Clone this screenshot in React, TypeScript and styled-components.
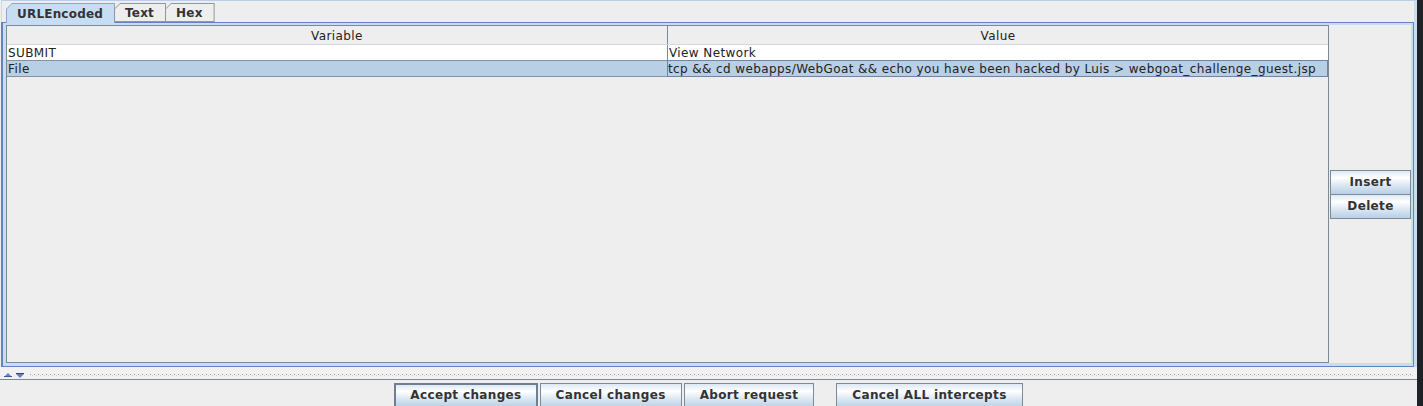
import styled, { createGlobalStyle, css } from 'styled-components';

const Global = createGlobalStyle`
  html, body {
    margin: 0;
    padding: 0;
    background: #eeeeee;
  }
  body {
    font-family: 'DejaVu Sans', 'Liberation Sans', sans-serif;
    font-size: 12px;
  }
  * {
    box-sizing: border-box;
  }
`;

const Screen = styled.div`
  width: 1423px;
  height: 406px;
  display: flex;
  overflow: hidden;
  background: #eeeeee;
`;

const Main = styled.div`
  width: 1417px;
  flex: none;
  display: flex;
  flex-direction: column;
`;

const DarkEdge = styled.div`
  flex: 1;
  background: #1e2126;
`;

const Tabbed = styled.div`
  flex: none;
  height: 367px;
  margin-left: 1px;
  border-top: 1px solid #b8cfe5;
  border-left: 1px solid #c8ddf2;
  border-right: 3px solid #c8ddf2;
  padding-top: 2px;
  display: flex;
  flex-direction: column;
`;

const TabStrip = styled.div`
  flex: none;
  display: flex;
  height: 20px;
  padding-left: 4px;
  margin-bottom: -1px;
  position: relative;
  z-index: 1;
`;

const TabOuter = styled.div<{ $selected?: boolean }>`
  height: ${(p) => (p.$selected ? 20 : 19)}px;
  margin-right: -1px;
  padding: 1px 1px ${(p) => (p.$selected ? 0 : 1)}px 1px;
  background: ${(p) => (p.$selected ? '#8fa6c6' : '#8a99a8')};
  clip-path: polygon(0 6px, 6px 0, 100% 0, 100% 100%, 0 100%);
`;

const TabFace = styled.div<{ $selected?: boolean }>`
  height: 100%;
  padding: 1px 11px 0 10px;
  display: flex;
  align-items: center;
  font-weight: bold;
  letter-spacing: 0.2px;
  color: #333333;
  background: ${(p) => (p.$selected ? '#c8ddf2' : '#eeeeee')};
  clip-path: polygon(0 5px, 5px 0, 100% 0, 100% 100%, 0 100%);
`;

const TabBody = styled.div`
  flex: 1;
  display: flex;
  border: 1px solid #6382bf;
  border-left-width: 2px;
  margin-left: -1px;
  padding: 2px 2px 3px 3px;
  background: #c8ddf2;
  min-height: 0;
`;

const TableScroll = styled.div`
  flex: 1;
  border: 1px solid #7a8a99;
  background: #eeeeee;
  display: flex;
  flex-direction: column;
`;

const Row = styled.div<{ $kind: 'header' | 'plain' | 'selected' }>`
  flex: none;
  display: grid;
  grid-template-columns: 660px 1fr;
  color: #222222;
  letter-spacing: 0.4px;
  ${(p) =>
    p.$kind === 'header'
      ? css`
          height: 19px;
          background: #eeeeee;
          border-bottom: 1px solid #d4d9df;
        `
      : css`
          height: 16px;
          border-bottom: 1px solid #8492a3;
          background: ${p.$kind === 'selected' ? '#b8cfe5' : '#ffffff'};
        `}
`;

const Cell = styled.div<{ $header?: boolean; $divider?: boolean; $focus?: boolean }>`
  line-height: 15px;
  padding: 1px 0 0 1px;
  white-space: nowrap;
  overflow: hidden;
  ${(p) =>
    p.$header &&
    css`
      text-align: center;
      line-height: 18px;
      padding: 1px 0 0 0;
    `}
  ${(p) => p.$divider && 'border-left: 1px solid #7a8a99;'}
  ${(p) =>
    p.$focus &&
    css`
      box-shadow: inset 0 0 0 1px #6f84a8;
      margin-top: -1px;
      height: 17px;
      padding-top: 2px;
    `}
`;

const SidePanel = styled.div`
  width: 82px;
  padding-left: 1px;
  background: #eeeeee;
  display: flex;
  flex-direction: column;
  justify-content: center;
`;

const buttonFace = css`
  font-family: 'DejaVu Sans', 'Liberation Sans', sans-serif;
  font-size: 12px;
  font-weight: bold;
  letter-spacing: 0.35px;
  color: #333333;
  border: 1px solid #7a8a99;
  background: linear-gradient(#dde8f3 0%, #ffffff 30%, #dde8f3 60%, #b8cfe5 100%);
  padding: 0;
  cursor: default;
`;

const SideButton = styled.button`
  ${buttonFace};
  height: 25px;
  width: 81px;
  & + & {
    margin-top: -1px;
  }
`;

const Splitter = styled.div`
  flex: none;
  height: 13px;
  border-bottom: 1px solid #7a8a99;
  background: #f1f1f1;
  display: flex;
  align-items: flex-start;
  padding: 5px 0 0 4px;
  gap: 4px;
`;

const Bumps = styled.div`
  flex: 1;
  height: 2px;
  margin: 2px 3px 0 2px;
  background:
    repeating-linear-gradient(90deg, #8e9cab 0 1px, transparent 1px 4px) 0 0 / 100% 1px no-repeat,
    repeating-linear-gradient(90deg, transparent 0 2px, #c6ced6 2px 3px, transparent 3px 4px) 0 1px / 100% 1px no-repeat;
`;

const ButtonBar = styled.div`
  flex: 1;
  display: flex;
  justify-content: center;
  align-items: flex-start;
  gap: 2px;
  padding-top: 3px;
`;

const ActionButton = styled.button<{ $default?: boolean; $apart?: boolean }>`
  ${buttonFace};
  flex: none;
  height: 26px;
  padding: 0 15px 2px 15px;
  ${(p) =>
    p.$default &&
    css`
      border: 2px solid #6e7f92;
      padding: 0 14px 2px 14px;
    `}
  ${(p) => p.$apart && 'margin-left: 20px;'}
`;

const UpArrow = () => (
  <svg width="8" height="5" viewBox="0 0 8 5">
    <polygon points="0,5 4,1 8,5" fill="#6382bf" />
    <line x1="0" y1="4.5" x2="8" y2="4.5" stroke="#3d5a8f" strokeWidth="1" />
  </svg>
);

const DownArrow = () => (
  <svg width="8" height="5" viewBox="0 0 8 5" style={{ marginTop: 1 }}>
    <line x1="0" y1="0.5" x2="8" y2="0.5" stroke="#2f4670" strokeWidth="1" />
    <polygon points="0,1 8,1 4,5" fill="#6382bf" />
  </svg>
);

const rows = [
  { name: 'SUBMIT', value: 'View Network', selected: false },
  {
    name: 'File',
    value: 'tcp && cd webapps/WebGoat && echo you have been hacked by Luis > webgoat_challenge_guest.jsp',
    selected: true,
  },
];

const tabs = ['URLEncoded', 'Text', 'Hex'];

export default function App() {
  return (
    <>
      <Global />
      <Screen>
        <Main>
          <Tabbed>
            <TabStrip>
              {tabs.map((t, i) => (
                <TabOuter key={t} $selected={i === 0}>
                  <TabFace $selected={i === 0}>{t}</TabFace>
                </TabOuter>
              ))}
            </TabStrip>
            <TabBody>
              <TableScroll>
                <Row $kind="header">
                  <Cell $header>Variable</Cell>
                  <Cell $header $divider>
                    Value
                  </Cell>
                </Row>
                {rows.map((r) => (
                  <Row key={r.name} $kind={r.selected ? 'selected' : 'plain'}>
                    <Cell>{r.name}</Cell>
                    <Cell $divider={!r.selected} $focus={r.selected}>
                      {r.value}
                    </Cell>
                  </Row>
                ))}
              </TableScroll>
              <SidePanel>
                <SideButton>Insert</SideButton>
                <SideButton>Delete</SideButton>
              </SidePanel>
            </TabBody>
          </Tabbed>
          <Splitter>
            <UpArrow />
            <DownArrow />
            <Bumps />
          </Splitter>
          <ButtonBar>
            <ActionButton $default>Accept changes</ActionButton>
            <ActionButton>Cancel changes</ActionButton>
            <ActionButton>Abort request</ActionButton>
            <ActionButton $apart>Cancel ALL intercepts</ActionButton>
          </ButtonBar>
        </Main>
        <DarkEdge />
      </Screen>
    </>
  );
}
